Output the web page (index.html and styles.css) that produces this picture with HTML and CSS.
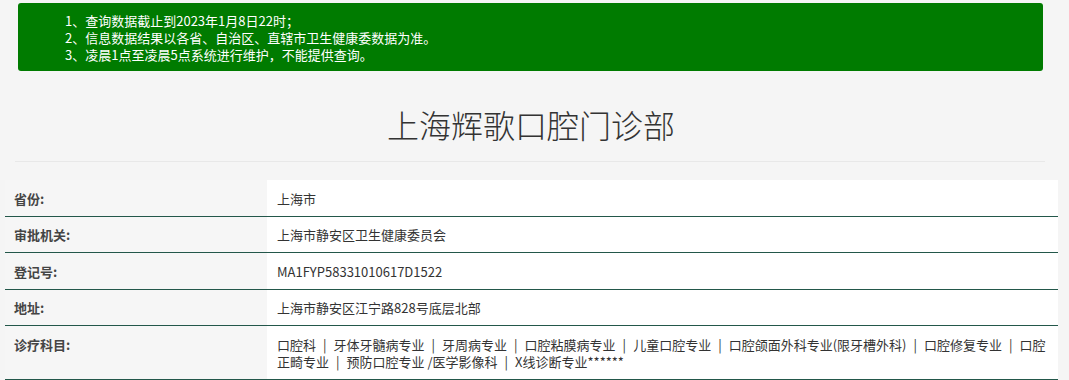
FILE: index.html
```html
<!DOCTYPE html>
<html lang="zh-CN">
<head>
<meta charset="utf-8">
<title>上海辉歌口腔门诊部</title>
<link rel="stylesheet" href="styles.css">
</head>
<body>
<div class="notice">
  <p>1、查询数据截止到2023年1月8日22时；</p>
  <p>2、信息数据结果以各省、自治区、直辖市卫生健康委数据为准。</p>
  <p>3、凌晨1点至凌晨5点系统进行维护，不能提供查询。</p>
</div>
<div class="title-wrap">
  <h1 class="title">上海辉歌口腔门诊部</h1>
</div>
<div class="info">
  <div class="row"><div class="label">省份:</div><div class="value">上海市</div></div>
  <div class="row"><div class="label">审批机关:</div><div class="value">上海市静安区卫生健康委员会</div></div>
  <div class="row"><div class="label">登记号:</div><div class="value">MA1FYP58331010617D1522</div></div>
  <div class="row"><div class="label">地址:</div><div class="value">上海市静安区江宁路828号底层北部</div></div>
  <div class="row"><div class="label">诊疗科目:</div><div class="value">口腔科<span class="sep">|</span>牙体牙髓病专业<span class="sep">|</span>牙周病专业<span class="sep">|</span>口腔粘膜病专业<span class="sep">|</span>儿童口腔专业<span class="sep">|</span>口腔颌面外科专业(限牙槽外科)<span class="sep">|</span>口腔修复专业<span class="sep">|</span>口腔正畸专业<span class="sep">|</span>预防口腔专业 /医学影像科<span class="sep">|</span>X线诊断专业******</div></div>
</div>
</body>
</html>
```
FILE: styles.css
```css
html, body {
  margin: 0;
  padding: 0;
  background: #f5f5f5;
  font-family: "Microsoft YaHei", "Noto Sans CJK SC", "Noto Sans", sans-serif;
  color: #333;
}
.notice {
  margin: 3px 26px 0 18px;
  height: 68px;
  box-sizing: border-box;
  background: #007b00;
  border-radius: 3px;
  padding: 9px 0 0 47px;
  color: #fff;
  font-size: 13px;
  line-height: 17px;
}
.notice p {
  margin: 0;
}
.title-wrap {
  margin: 0 24px 0 15px;
  border-bottom: 1px solid #e8e8e8;
  padding: 31px 0 15px;
}
.title {
  margin: 0;
  text-align: center;
  font-size: 32px;
  font-weight: 300;
  line-height: 44px;
  color: #333;
  padding-left: 2px;
}
.info {
  margin: 18px 11px 0 5px;
}
.row {
  display: flex;
  border-bottom: 1px solid #23574a;
  font-size: 13px;
  line-height: 17px;
}
.label {
  width: 262px;
  flex: none;
  background: #f6f6f6;
  padding: 9.5px 0 9px 9px;
  box-sizing: border-box;
  font-weight: 700;
  color: #444;
}
.value {
  flex: 1;
  background: #fff;
  padding: 9.5px 10px 9px 10px;
  color: #333;
}
.sep {
  margin: 0 7px;
  color: #333;
}
```
